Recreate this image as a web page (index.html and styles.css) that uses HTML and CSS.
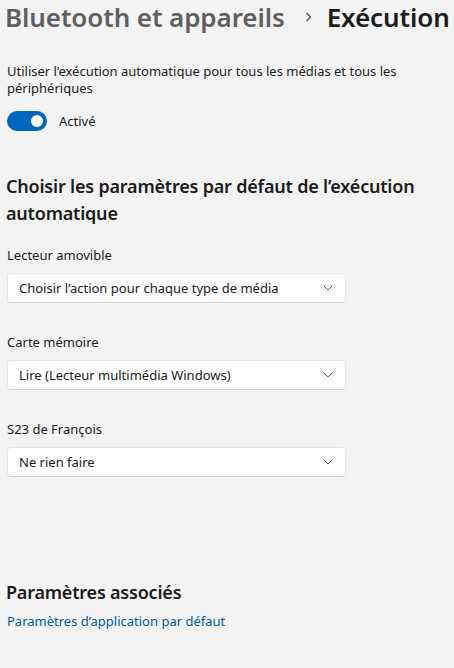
FILE: index.html
```html
<!DOCTYPE html>
<html lang="fr">
<head>
<meta charset="utf-8">
<link rel="stylesheet" href="styles.css">
</head>
<body>
<div class="page">
  <h1 class="title">
    <span class="crumb">Bluetooth et appareils</span>
    <svg class="crumb-sep" width="8" height="12" viewBox="0 0 8 12"><path d="M2 2.5 L5.5 6 L2 9.5" fill="none" stroke="#5f5f5f" stroke-width="1.6" stroke-linecap="round" stroke-linejoin="round"/></svg>
    <span class="current">Exécution</span>
  </h1>

  <section class="autoplay">
    <p class="desc">Utiliser l’exécution automatique pour tous les médias et tous les périphériques</p>
    <div class="toggle-row">
      <span class="toggle"><span class="knob"></span></span>
      <span class="toggle-label">Activé</span>
    </div>
  </section>

  <h2 class="section-title">Choisir les paramètres par défaut de l’exécution automatique</h2>

  <div class="field">
    <div class="label">Lecteur amovible</div>
    <div class="select"><span>Choisir l’action pour chaque type de média</span>
      <svg class="chev" width="10" height="6" viewBox="0 0 10 6"><path d="M1 1 L5 5 L9 1" fill="none" stroke="#5c5c5c" stroke-width="1" stroke-linecap="round" stroke-linejoin="round"/></svg>
    </div>
  </div>

  <div class="field">
    <div class="label">Carte mémoire</div>
    <div class="select"><span>Lire (Lecteur multimédia Windows)</span>
      <svg class="chev" width="10" height="6" viewBox="0 0 10 6"><path d="M1 1 L5 5 L9 1" fill="none" stroke="#5c5c5c" stroke-width="1" stroke-linecap="round" stroke-linejoin="round"/></svg>
    </div>
  </div>

  <div class="field">
    <div class="label">S23 de François</div>
    <div class="select"><span>Ne rien faire</span>
      <svg class="chev" width="10" height="6" viewBox="0 0 10 6"><path d="M1 1 L5 5 L9 1" fill="none" stroke="#5c5c5c" stroke-width="1" stroke-linecap="round" stroke-linejoin="round"/></svg>
    </div>
  </div>

  <section class="related">
    <h2 class="related-title">Paramètres associés</h2>
    <a class="link" href="#">Paramètres d’application par défaut</a>
  </section>
</div>
</body>
</html>
```
FILE: styles.css
```css
html, body {
  margin: 0;
  padding: 0;
  background: #f3f3f3;
}
body {
  font-family: "Noto Sans", "Open Sans", sans-serif;
  color: #1b1b1b;
  overflow: hidden;
}
.page {
  padding: 0 0 0 7px;
}
.title {
  margin: 0 0 0 -2px;
  height: 34px;
  display: flex;
  align-items: center;
  white-space: nowrap;
  font-size: 26px;
  letter-spacing: -0.1px;
  font-weight: 600;
  line-height: 34px;
}
.crumb {
  color: #5f5f5f;
}
.crumb-sep {
  flex: none;
  margin: 0 14px 0 20px;
}
.current {
  color: #1b1b1b;
}
.autoplay {
  margin-top: 29px;
}
.desc {
  margin: 0;
  font-size: 13px;
  line-height: 17px;
  width: 420px;
}
.toggle-row {
  margin-top: 14px;
  display: flex;
  align-items: center;
  gap: 12px;
}
.toggle {
  width: 40px;
  height: 20px;
  border-radius: 10px;
  background: #0067c0;
  display: flex;
  align-items: center;
  justify-content: flex-end;
  padding-right: 4px;
  box-sizing: border-box;
}
.knob {
  width: 12px;
  height: 12px;
  border-radius: 50%;
  background: #fff;
}
.toggle-label {
  font-size: 13px;
}
.section-title {
  margin: 42px 0 0 -1px;
  font-size: 18px;
  letter-spacing: -0.2px;
  font-weight: 600;
  line-height: 27px;
  width: 440px;
}
.field {
  margin-top: 19px;
}
.field + .field {
  margin-top: 30px;
}
.label {
  font-size: 13px;
  line-height: 18px;
}
.select {
  margin-top: 9px;
  width: 339px;
  height: 30px;
  box-sizing: border-box;
  background: #fdfdfd;
  border: 1px solid #e6e6e6;
  border-bottom-color: #d2d2d2;
  border-radius: 4px;
  display: flex;
  align-items: center;
  justify-content: space-between;
  padding: 0 12px 0 11px;
  font-size: 13px;
}
.related {
  margin-top: 102px;
}
.related-title {
  margin: 0 0 0 -1px;
  font-size: 18px;
  letter-spacing: -0.2px;
  font-weight: 600;
  line-height: 27px;
}
.link {
  display: block;
  margin-top: 6px;
  font-size: 13px;
  line-height: 18px;
  color: #005a9e;
  text-decoration: none;
}
```
